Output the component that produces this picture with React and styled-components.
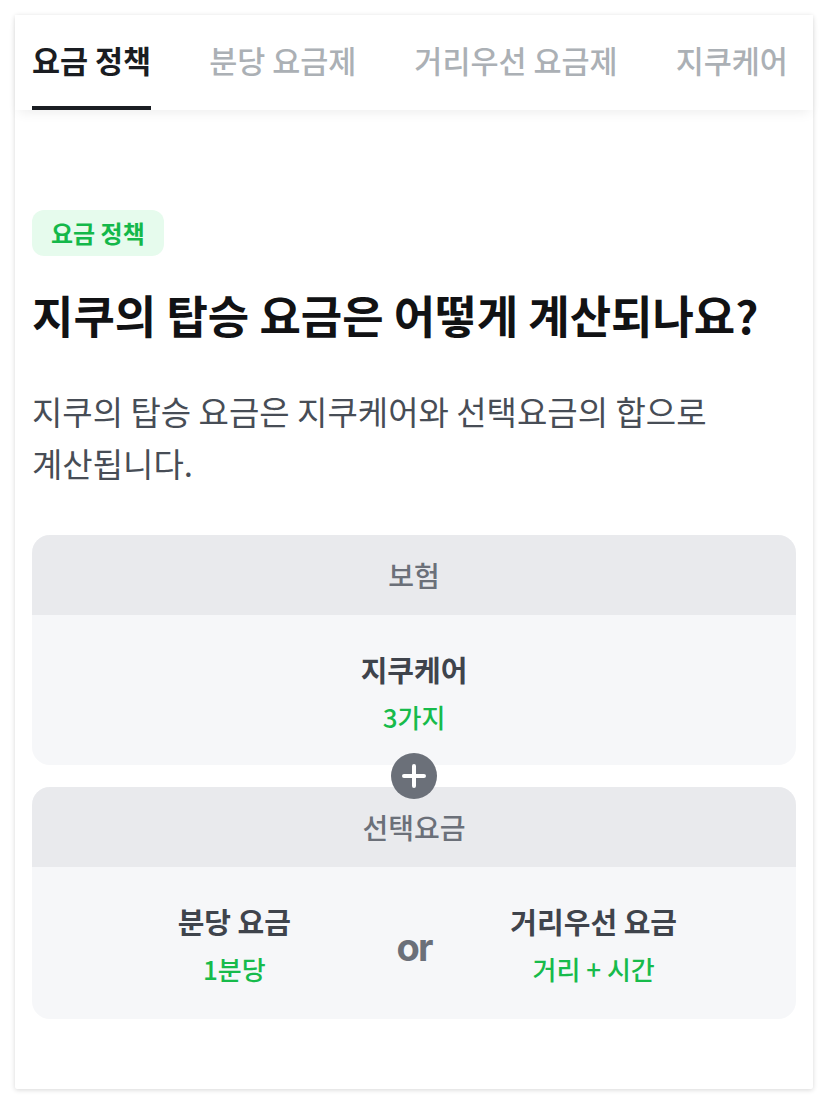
import React from "react";
import styled, { createGlobalStyle } from "styled-components";

const GlobalStyle = createGlobalStyle`
  * { box-sizing: border-box; }
  body {
    margin: 0;
    background: #fff;
    font-family: "Noto Sans CJK KR", "Noto Sans", sans-serif;
  }
`;

const tabs = ["요금 정책", "분당 요금제", "거리우선 요금제", "지쿠케어"];

const App = () => {
  return (
    <>
      <GlobalStyle />
      <Page>
        <Card>
          <TabBar>
            {tabs.map((t, i) => (
              <Tab key={t} $active={i === 0}>
                {t}
              </Tab>
            ))}
          </TabBar>
          <Content>
            <Badge>요금 정책</Badge>
            <Title>지쿠의 탑승 요금은 어떻게 계산되나요?</Title>
            <Desc>
              지쿠의 탑승 요금은 지쿠케어와 선택요금의 합으로
              <br />
              계산됩니다.
            </Desc>

            <FareStack>
              <FareBox>
                <BoxHead>보험</BoxHead>
                <BoxBody>
                  <Option>
                    <OptionTitle>지쿠케어</OptionTitle>
                    <OptionSub>3가지</OptionSub>
                  </Option>
                </BoxBody>
              </FareBox>

              <Joiner>
                <PlusCircle>
                  <svg width="24" height="24" viewBox="0 0 24 24">
                    <path
                      d="M12 2v20M2 12h20"
                      stroke="#fff"
                      strokeWidth="4"
                      strokeLinecap="round"
                    />
                  </svg>
                </PlusCircle>
              </Joiner>

              <FareBox>
                <BoxHead>선택요금</BoxHead>
                <BoxBody $split>
                  <Option>
                    <OptionTitle>분당 요금</OptionTitle>
                    <OptionSub>1분당</OptionSub>
                  </Option>
                  <Or>or</Or>
                  <Option>
                    <OptionTitle>거리우선 요금</OptionTitle>
                    <OptionSub>거리 + 시간</OptionSub>
                  </Option>
                </BoxBody>
              </FareBox>
            </FareStack>
          </Content>
        </Card>
      </Page>
    </>
  );
};

export default App;

const Page = styled.div`
  padding: 15px;
`;

const Card = styled.div`
  background: #fff;
  border-radius: 2px;
  box-shadow: 0 1px 5px rgba(0, 0, 0, 0.16);
`;

const TabBar = styled.div`
  position: relative;
  z-index: 1;
  display: flex;
  gap: 58px;
  height: 95px;
  padding: 0 17px;
  background: #fff;
  box-shadow: 0 6px 12px -4px rgba(0, 0, 0, 0.08);
  white-space: nowrap;
`;

const Tab = styled.div`
  padding: 26px 0 25px;
  font-size: 30.5px;
  font-weight: ${(p) => (p.$active ? 700 : 500)};
  line-height: 39px;
  color: ${(p) => (p.$active ? "#1a1d22" : "#abb0b5")};
  border-bottom: 4px solid ${(p) => (p.$active ? "#1a1d22" : "transparent")};
`;

const Content = styled.div`
  padding: 100px 17px 70px;
`;

const Badge = styled.span`
  display: inline-block;
  padding: 8px 19px;
  border-radius: 12px;
  background: #e6fbed;
  color: #14b84a;
  font-size: 24px;
  font-weight: 700;
  line-height: 30px;
`;

const Title = styled.h1`
  margin: 30px 0 0;
  font-size: 45px;
  font-weight: 700;
  line-height: 57px;
  color: #111214;
`;

const Desc = styled.p`
  margin: 42px 0 0;
  font-size: 33px;
  font-weight: 400;
  line-height: 52px;
  color: #474d56;
`;

const FareStack = styled.div`
  margin-top: 46px;
  display: flex;
  flex-direction: column;
`;

const FareBox = styled.div`
  border-radius: 18px;
  overflow: hidden;
  background: #f6f7f9;
`;

const BoxHead = styled.div`
  display: flex;
  align-items: center;
  justify-content: center;
  height: 80px;
  background: #e9eaed;
  font-size: 28px;
  font-weight: 500;
  color: #6b7079;
`;

const BoxBody = styled.div`
  display: ${(p) => (p.$split ? "grid" : "flex")};
  grid-template-columns: 1fr auto 1fr;
  justify-content: center;
  align-items: center;
  padding: 36px 40px ${(p) => (p.$split ? "33px" : "31px")};
`;

const Option = styled.div`
  display: flex;
  flex-direction: column;
  align-items: center;
`;

const OptionTitle = styled.div`
  font-size: 29px;
  font-weight: 700;
  line-height: 36px;
  color: #3f444c;
`;

const OptionSub = styled.div`
  margin-top: 13px;
  font-size: 26px;
  font-weight: 500;
  line-height: 34px;
  color: #17bb4b;
`;

const Or = styled.div`
  font-family: Inter, "Noto Sans", sans-serif;
  font-size: 38px;
  font-weight: 700;
  letter-spacing: -2px;
  line-height: 40px;
  color: #6b7079;
  padding-top: 4px;
`;

const Joiner = styled.div`
  position: relative;
  height: 22px;
`;

const PlusCircle = styled.div`
  position: absolute;
  z-index: 1;
  top: 50%;
  left: 50%;
  transform: translate(-50%, -50%);
  width: 46px;
  height: 46px;
  border-radius: 50%;
  background: #6b7079;
  display: flex;
  align-items: center;
  justify-content: center;
`;
